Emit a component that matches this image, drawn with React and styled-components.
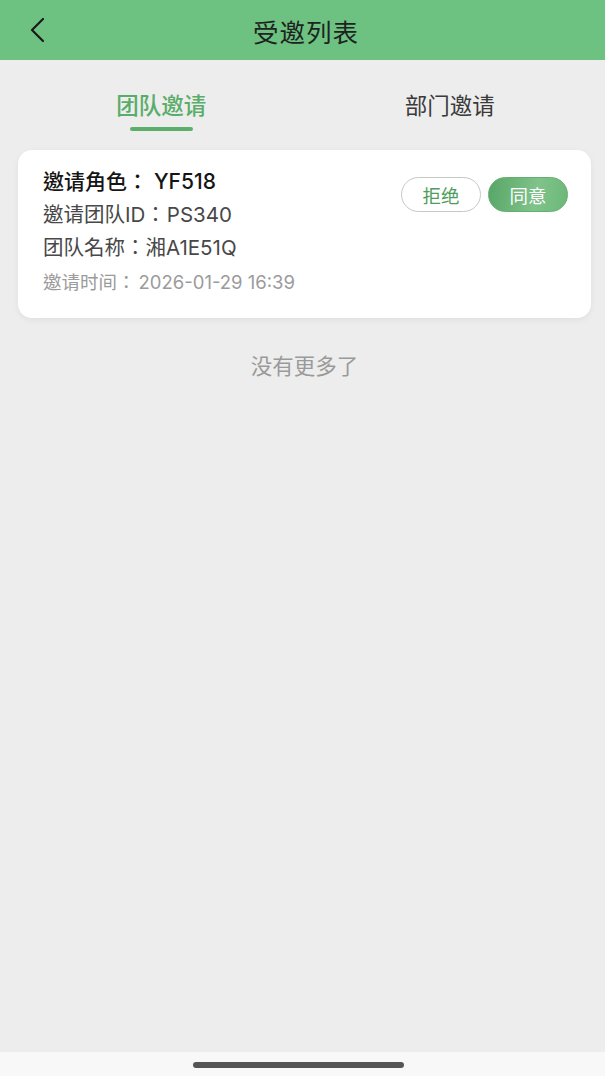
import React from "react";
import styled, { createGlobalStyle } from "styled-components";

const Global = createGlobalStyle`
  html, body { margin: 0; padding: 0; background: #ededed; }
  body { font-family: Inter, "Noto Sans CJK TC", "Noto Sans", sans-serif; }
  #root { min-height: 100vh; }
`;

const Page = styled.div`
  min-height: 100vh;
  display: flex;
  flex-direction: column;
  background: #ededed;
`;

const Header = styled.header`
  height: 60px;
  background: #6dc281;
  display: flex;
  align-items: center;
  justify-content: center;
  position: relative;
`;

const BackButton = styled.button`
  position: absolute;
  left: 24px;
  top: 14px;
  width: 28px;
  height: 32px;
  padding: 0;
  border: none;
  background: transparent;
  display: flex;
  align-items: center;
  justify-content: center;
`;

const Title = styled.h1`
  margin: 0;
  padding-left: 7px;
  font-family: "Noto Sans CJK SC", sans-serif;
  font-size: 25.5px;
  font-weight: 400;
  color: #1d241f;
  letter-spacing: 1px;
`;

const Tabs = styled.nav`
  display: grid;
  grid-template-columns: 1fr 1fr;
  height: 75px;
`;

const Tab = styled.div`
  display: flex;
  flex-direction: column;
  align-items: center;
  justify-content: flex-start;
  padding-top: 28px;
  padding-left: ${(p) => (p.$active ? "20px" : "0")};
  padding-right: ${(p) => (p.$active ? "0" : "8px")};
  font-family: "Noto Sans CJK SC", sans-serif;
  font-size: 22.5px;
  color: ${(p) => (p.$active ? "#5aad69" : "#3a3a3a")};
  font-weight: ${(p) => (p.$active ? 500 : 400)};
`;

const TabLabel = styled.span`
  line-height: 32px;
`;

const Underline = styled.span`
  margin-top: 7px;
  width: 63px;
  height: 4px;
  border-radius: 2px;
  background: ${(p) => (p.$active ? "#5cae6b" : "transparent")};
`;

const List = styled.div`
  padding: 15px 14px 0 18px;
`;

const Card = styled.div`
  background: #fff;
  border-radius: 14px;
  box-shadow: 0 2px 6px rgba(0, 0, 0, 0.06);
  padding: 16px 23px 18px 25px;
  display: flex;
  justify-content: space-between;
  align-items: flex-start;
`;

const Info = styled.div`
  display: flex;
  flex-direction: column;
`;

const Line = styled.div`
  font-size: ${(p) => p.$size}px;
  color: ${(p) => p.$color};
  font-weight: ${(p) => p.$weight || 400};
  line-height: ${(p) => p.$lh}px;
`;

const Value = styled.span`
  margin-left: ${(p) => p.$gap || 0}px;
`;

const Actions = styled.div`
  display: flex;
  gap: 7px;
  margin-top: 11px;
`;

const Pill = styled.button`
  width: 80px;
  height: 35px;
  border-radius: 18px;
  font-family: "Noto Sans CJK SC", sans-serif;
  font-size: 18.5px;
  padding: 0;
  display: flex;
  align-items: center;
  justify-content: center;
  border: 1px solid ${(p) => (p.$primary ? "#62b070" : "#c5c9c6")};
  color: ${(p) => (p.$primary ? "#ffffff" : "#4e9d5d")};
  background: ${(p) =>
    p.$primary ? "linear-gradient(100deg, #58a566 0%, #80c38b 60%, #6bb877 100%)" : "#ffffff"};
`;

const NoMore = styled.div`
  text-align: center;
  font-family: "Noto Sans CJK SC", sans-serif;
  font-size: 21.5px;
  color: #9a9a9a;
  margin-top: 32px;
  line-height: 30px;
`;

const HomeBar = styled.div`
  margin-top: auto;
  height: 24px;
  background: #f8f8f8;
  display: flex;
  justify-content: center;
  align-items: flex-start;
`;

const Indicator = styled.span`
  margin-top: 10px;
  margin-right: 8px;
  width: 211px;
  height: 6px;
  border-radius: 3px;
  background: #555;
`;

export default function App() {
  return (
    <Page>
      <Global />
      <Header>
        <BackButton aria-label="返回">
          <svg width="20" height="28" viewBox="0 0 20 28" fill="none">
            <path d="M15 3 L4 14 L15 25" stroke="#1a1a1a" strokeWidth="2.2" strokeLinecap="round" strokeLinejoin="round" />
          </svg>
        </BackButton>
        <Title>受邀列表</Title>
      </Header>
      <Tabs>
        <Tab $active>
          <TabLabel>团队邀请</TabLabel>
          <Underline $active />
        </Tab>
        <Tab>
          <TabLabel>部门邀请</TabLabel>
          <Underline />
        </Tab>
      </Tabs>
      <List>
        <Card>
          <Info>
            <Line $size={21} $color="#151515" $weight={500} $lh={32}>
              邀请角色：<Value $gap={6}>YF518</Value>
            </Line>
            <Line $size={20.5} $color="#484848" $lh={34}>
              邀请团队ID：<Value $gap={1}>PS340</Value>
            </Line>
            <Line $size={20.5} $color="#484848" $lh={32}>
              团队名称：<Value>湘A1E51Q</Value>
            </Line>
            <Line $size={18.5} $color="#9b9b9b" $lh={36}>
              邀请时间：<Value $gap={3}>2026-01-29 16:39</Value>
            </Line>
          </Info>
          <Actions>
            <Pill>拒绝</Pill>
            <Pill $primary>同意</Pill>
          </Actions>
        </Card>
        <NoMore>没有更多了</NoMore>
      </List>
      <HomeBar>
        <Indicator />
      </HomeBar>
    </Page>
  );
}
